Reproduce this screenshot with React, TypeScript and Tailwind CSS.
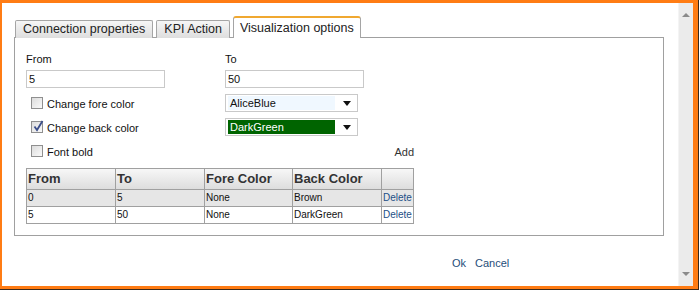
import React from "react";

const font = { fontFamily: '"Liberation Sans", Arial, sans-serif' };

function Checkbox({ checked }: { checked?: boolean }) {
  return (
    <span className="relative w-[12px] h-[12px] border border-[#8f8f8f] bg-gradient-to-br from-[#dcdcdc] to-[#fafafa] shrink-0">
      {checked && (
        <svg className="absolute -top-[2px] left-[1px]" width="11" height="12" viewBox="0 0 11 12">
          <path d="M1.5 6.5 L4 10 L9.5 1" stroke="#3c4f8a" strokeWidth="1.8" fill="none" />
        </svg>
      )}
    </span>
  );
}

function Select({ value, bg, color }: { value: string; bg: string; color: string }) {
  return (
    <div className="w-[133px] h-[18px] border border-[#c9c9c9] bg-white flex items-center pl-[2px] pr-[6px] gap-[2px]">
      <span
        className={`flex-1 h-[14px] text-[11px] leading-[14px] pl-[2px] ${bg} ${color}`}
      >
        {value}
      </span>
      <svg width="8" height="5" viewBox="0 0 8 5" className="ml-[6px]">
        <path d="M0 0 H8 L4 5 Z" fill="#111" />
      </svg>
    </div>
  );
}

const rows = [
  { from: "0", to: "5", fore: "None", back: "Brown", bg: "bg-[#e6e6e6]" },
  { from: "5", to: "50", fore: "None", back: "DarkGreen", bg: "bg-white" },
];

export default function App() {
  return (
    <div className="w-[699px] h-[290px] bg-[#ff7c14] pt-[3px] pl-[2px] pr-[5px] pb-[3px] border-b border-r border-[#3b2a1c] flex" style={font}>
      <div className="flex-1 bg-white flex flex-col pl-[12px] pt-[13px]">
        {/* Tabs */}
        <div className="flex items-end gap-[3px] pl-[1px] text-[12.5px] text-[#222] -mb-[1px] relative z-10">
          <div className="h-[18px] px-[7px] border border-[#a5a5a5] border-b-0 rounded-t-[2px] bg-gradient-to-b from-[#f6f6f6] to-[#dedede] leading-[17px]">
            Connection properties
          </div>
          <div className="h-[18px] px-[7px] border border-[#a5a5a5] border-b-0 rounded-t-[2px] bg-gradient-to-b from-[#f6f6f6] to-[#dedede] leading-[17px]">
            KPI Action
          </div>
          <div className="h-[22px] px-[6px] border border-[#a5a5a5] border-t-2 border-t-[#f0a830] border-b-0 rounded-t-[3px] bg-white leading-[20px]">
            Visualization options
          </div>
        </div>

        {/* Panel */}
        <div className="w-[650px] h-[199px] border border-[#a0a0a0] pl-[11px] pt-[15px] text-[11px] text-[#111]">
          <div className="flex gap-[60px]">
            <div className="w-[139px]">
              <div className="h-[13px] leading-[13px]">From</div>
              <div className="mt-[4px] h-[18px] border border-[#c9c9c9] pl-[2px] leading-[16px]">5</div>
            </div>
            <div className="w-[139px]">
              <div className="h-[13px] leading-[13px]">To</div>
              <div className="mt-[4px] h-[18px] border border-[#c9c9c9] pl-[2px] leading-[16px]">50</div>
            </div>
          </div>

          <div className="mt-[3px] w-[388px]">
            <div className="h-[24px] flex items-center">
              <div className="w-[199px] flex items-center gap-[4px] pl-[5px]">
                <Checkbox />
                <span className="pt-[2px]">Change fore color</span>
              </div>
              <Select value="AliceBlue" bg="bg-[#f0f8ff]" color="text-[#111]" />
            </div>
            <div className="h-[24px] flex items-center">
              <div className="w-[199px] flex items-center gap-[4px] pl-[5px]">
                <Checkbox checked />
                <span className="pt-[2px]">Change back color</span>
              </div>
              <Select value="DarkGreen" bg="bg-[#006400]" color="text-white" />
            </div>
            <div className="h-[24px] flex items-center">
              <div className="flex-1 flex items-center gap-[4px] pl-[5px]">
                <Checkbox />
                <span className="pt-[2px]">Font bold</span>
              </div>
              <span className="pt-[2px] text-[#333]">Add</span>
            </div>
          </div>

          <table className="mt-[5px] w-[388px] border-collapse border border-[#a0a0a0] text-[10px]">
            <thead>
              <tr className="h-[20px] bg-gradient-to-b from-[#f7f7f7] to-[#dcdcdc] text-[13px] font-bold text-[#333] text-left">
                <th className="w-[89px] border border-[#a0a0a0] pl-[1px] font-bold">From</th>
                <th className="w-[89px] border border-[#a0a0a0] pl-[1px] font-bold">To</th>
                <th className="w-[88px] border border-[#a0a0a0] pl-[1px] font-bold">Fore Color</th>
                <th className="w-[89px] border border-[#a0a0a0] pl-[1px] font-bold">Back Color</th>
                <th className="border border-[#a0a0a0]"></th>
              </tr>
            </thead>
            <tbody>
              {rows.map((r, i) => (
                <tr key={i} className={`h-[17px] ${r.bg}`}>
                  <td className="border border-[#a0a0a0] pl-[1px]">{r.from}</td>
                  <td className="border border-[#a0a0a0] pl-[1px]">{r.to}</td>
                  <td className="border border-[#a0a0a0] pl-[1px]">{r.fore}</td>
                  <td className="border border-[#a0a0a0] pl-[1px]">{r.back}</td>
                  <td className="border border-[#a0a0a0] pl-[1px] text-[#1d4f86]">Delete</td>
                </tr>
              ))}
            </tbody>
          </table>
        </div>

        <div className="mt-[19px] pl-[438px] flex gap-[9px] text-[11px] text-[#1f4e7a]">
          <span>Ok</span>
          <span>Cancel</span>
        </div>
      </div>

      {/* Scrollbar */}
      <div className="w-[15px] bg-[#ebebeb] border-l border-[#f4f4f4] flex flex-col items-center justify-between py-[10px]">
        <svg width="8" height="4" viewBox="0 0 8 4">
          <path d="M0 4 H8 L4 0 Z" fill="#8a8a8a" />
        </svg>
        <svg width="8" height="4" viewBox="0 0 8 4">
          <path d="M0 0 H8 L4 4 Z" fill="#8a8a8a" />
        </svg>
      </div>
    </div>
  );
}
